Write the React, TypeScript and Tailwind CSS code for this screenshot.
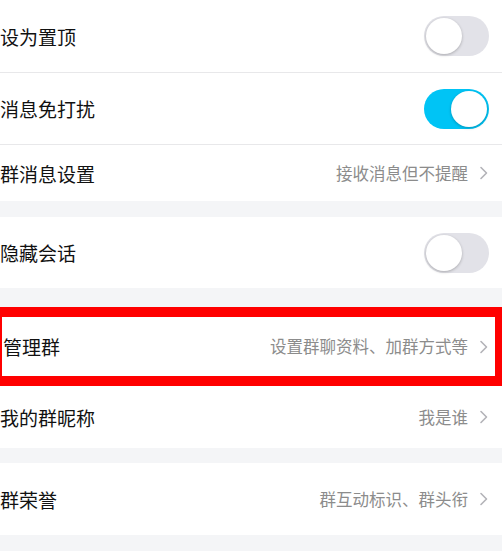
import React from 'react';

const font = { fontFamily: '"Noto Sans CJK SC", "Noto Sans", sans-serif' };

const Chevron = () => (
  <svg width="10" height="14" viewBox="0 0 10 14" fill="none" className="shrink-0">
    <path d="M2 1.5 L7.5 7 L2 12.5" stroke="#b3b3b8" strokeWidth="1.6" strokeLinecap="round" strokeLinejoin="round" />
  </svg>
);

const Toggle = ({ on }: { on: boolean }) => (
  <div
    className={`w-[65px] h-[40px] rounded-full p-[2px] flex items-center shrink-0 ${
      on ? 'bg-[#00c4f5] justify-end' : 'bg-[#e2e2e8] justify-start'
    }`}
  >
    <div className="w-[36px] h-[36px] rounded-full bg-white shadow-[0_1px_3px_rgba(0,0,0,0.25)]" />
  </div>
);

interface RowProps {
  label: string;
  value?: string;
  toggle?: boolean;
  className?: string;
}

const Row: React.FC<RowProps> = ({ label, value, toggle, className = '' }) => (
  <div className={`flex items-center justify-between bg-white pr-[13px] ${className}`}>
    <span className="text-[19px] text-[#111] leading-none">{label}</span>
    {toggle !== undefined ? (
      <Toggle on={toggle} />
    ) : (
      <div className="flex items-center gap-[11px]">
        <span className="text-[16.5px] text-[#8c8c8c] leading-none">{value}</span>
        <Chevron />
      </div>
    )}
  </div>
);

export default function App() {
  return (
    <div className="w-[502px] h-[558px] bg-white overflow-hidden flex flex-col" style={font}>
      <Row label="设为置顶" toggle={false} className="h-[73px] border-b border-[#e8e8ea]" />
      <Row label="消息免打扰" toggle={true} className="h-[72px] border-b border-[#e8e8ea]" />
      <Row label="群消息设置" value="接收消息但不提醒" className="h-[56px]" />
      <div className="h-[16px] bg-[#f4f5f7]" />
      <Row label="隐藏会话" toggle={false} className="h-[71px]" />
      <div className="h-[19px] bg-[#f4f5f7]" />
      <Row
        label="管理群"
        value="设置群聊资料、加群方式等"
        className="h-[79px] border-t-[10px] border-b-[10px] border-l-[2px] border-r-[7px] border-[#ff0000] !pr-[6px] pl-[1px]"
      />
      <Row label="我的群昵称" value="我是谁" className="h-[62px]" />
      <div className="h-[15px] bg-[#f4f5f7]" />
      <Row label="群荣誉" value="群互动标识、群头衔" className="h-[72px]" />
      <div className="h-[16px] bg-[#f4f5f7]" />
      <div className="flex-1 bg-white" />
    </div>
  );
}
